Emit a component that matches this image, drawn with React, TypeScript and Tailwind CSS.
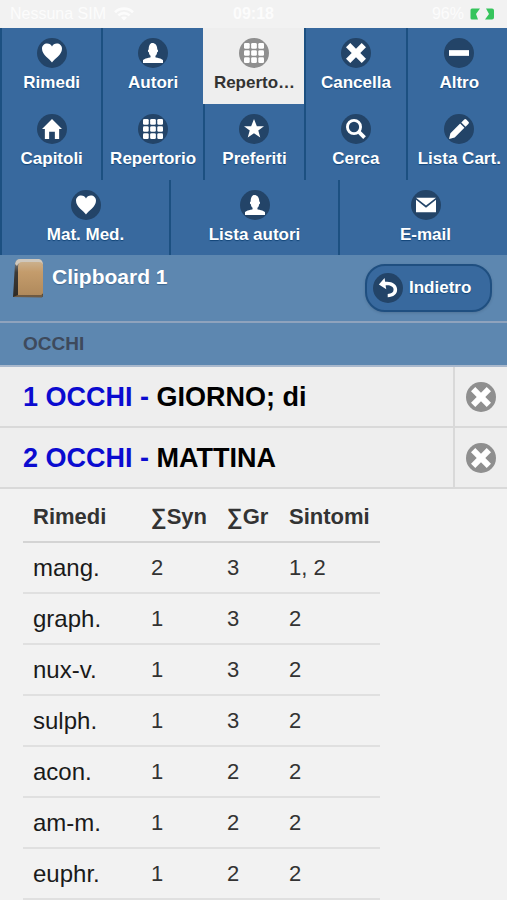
import type { ReactNode } from "react";

type IconName =
  | "heart"
  | "user"
  | "grid"
  | "delete"
  | "minus"
  | "home"
  | "star"
  | "search"
  | "edit"
  | "mail"
  | "back";

const shapes: Record<IconName, ReactNode> = {
  heart: (
    <path d="M7 13.6C5.6 11.4 0 8.2 0 4C0 1.8 1.6.4 3.6.4C5.2.4 6.4 1.3 7 2.4C7.6 1.3 8.8.4 10.4.4C12.4.4 14 1.8 14 4C14 8.2 8.4 11.4 7 13.6Z" />
  ),
  user: (
    <path d="M8.851,10.101c-0.18-0.399-0.2-0.763-0.153-1.104C9.383,8.49,9.738,7.621,9.891,6.465C10.493,6.355,10.5,5.967,10.5,5.5c0-0.437-0.008-0.804-0.502-0.94C9.999,4.539,10,4.521,10,4.5c0-2.103-1-4-2-4C8,0.5,7.5,0,6.5,0C5,0,4,1.877,4,4.5c0,0.021,0.001,0.039,0.002,0.06C3.508,4.696,3.5,5.063,3.5,5.5c0,0.467,0.007,0.855,0.609,0.965C4.262,7.621,4.617,8.49,5.303,8.997c0.047,0.341,0.026,0.704-0.153,1.104C1.503,10.503,0,12,0,12v2h14v-2C14,12,12.497,10.503,8.851,10.101z" />
  ),
  grid: (
    <>
      {[0, 5, 10].map((y) =>
        [0, 5, 10].map((x) => <rect key={`${x}-${y}`} x={x} y={y} width="4" height="4" rx="0.9" />),
      )}
    </>
  ),
  delete: <polygon points="14,3 11,0 7,4 3,0 0,3 4,7 0,11 3,14 7,10 11,14 14,11 10,7" />,
  minus: <rect y="5" width="14" height="4" />,
  home: <polygon points="7,0 0,7 2,7 2,14 5,14 5,9 9,9 9,14 12,14 12,7 14,7" />,
  star: <polygon points="14,5 9,5 7,0 5,5 0,5 4,8 2.625,13 7,10 11.375,13 10,8" />,
  search: (
    <>
      <circle cx="5.6" cy="5.6" r="4.6" fill="none" stroke="currentColor" strokeWidth="2" />
      <path d="M9 9L13 13" stroke="currentColor" strokeWidth="2.6" />
    </>
  ),
  edit: (
    <path d="M1 10L0 14L4 13L10.8 6.2L7.8 3.2ZM8.6 2.4L11.6 5.4L13.5 3.5C14.1 2.9 14.1 2.4 13.6 1.9L12.1.4C11.6-.1 11.1-.1 10.5.5Z" />
  ),
  mail: <path d="M0 3.4V12H14V3.4L7 9ZM14 2H0L7 7.4Z" />,
  back: (
    <path d="M4.6 0L5 2.7C9.8 2.2 13.4 4.4 13.4 8.2C13.4 11.4 10.8 13.2 6.8 13.4V11.2C9.4 10.9 10.9 9.9 10.9 8.2C10.9 6 8.6 4.9 5.3 5.2L5.8 7.8L.6 4.6Z" />
  ),
};

function IconDisc({ name, disc }: { name: IconName; disc: string }) {
  return (
    <span className={`flex size-[30px] shrink-0 items-center justify-center rounded-full text-white ${disc}`}>
      <svg viewBox="0 0 14 14" className="size-5" fill="currentColor" aria-hidden="true">
        {shapes[name]}
      </svg>
    </span>
  );
}

type NavItem = { label: string; icon: IconName; active?: boolean };

const topItems: NavItem[] = [
  { label: "Rimedi", icon: "heart" },
  { label: "Autori", icon: "user" },
  { label: "Reperto…", icon: "grid", active: true },
  { label: "Cancella", icon: "delete" },
  { label: "Altro", icon: "minus" },
  { label: "Capitoli", icon: "home" },
  { label: "Repertorio", icon: "grid" },
  { label: "Preferiti", icon: "star" },
  { label: "Cerca", icon: "search" },
  { label: "Lista Cart.", icon: "edit" },
];

const bottomItems: NavItem[] = [
  { label: "Mat. Med.", icon: "heart" },
  { label: "Lista autori", icon: "user" },
  { label: "E-mail", icon: "mail" },
];

function NavButton({ label, icon, active }: NavItem) {
  const tone = active
    ? "border-[#eeeeee] bg-[#eeeeee] text-[#333333]"
    : "border-[#1c5081] bg-[#38699e] text-white [text-shadow:0_1px_1px_#114477]";
  return (
    <button
      type="button"
      className={`flex min-w-0 flex-col items-center border-l-2 pt-2.5 text-[17px] leading-[30px] font-bold whitespace-nowrap ${tone}`}
    >
      <IconDisc name={icon} disc={active ? "bg-[#8f8f8f]" : "bg-[#234468]"} />
      <span>{label}</span>
    </button>
  );
}

function StatusBar() {
  return (
    <div className="grid h-7 grid-cols-3 items-center bg-[#f2f2f2] px-2.5 text-base text-[#fcfcfc]">
      <div className="flex items-center gap-2 whitespace-nowrap">
        <span>Nessuna SIM</span>
        <svg viewBox="0 0 20 14" className="h-3.5 w-5" fill="none" stroke="currentColor" strokeWidth="2.6" aria-hidden="true">
          <path d="M1 5.2C6 .4 14 .4 19 5.2M4.4 8.4C7.6 5.4 12.4 5.4 15.6 8.4" />
          <path d="M7 10.6C8.8 9.2 11.2 9.2 13 10.6L10 13.6Z" fill="currentColor" stroke="none" />
        </svg>
      </div>
      <span className="text-center font-bold">09:18</span>
      <div className="flex items-center justify-end gap-1.5 pr-0.5">
        <span>96%</span>
        <svg viewBox="0 0 25 12" className="h-3 w-[25px]" aria-hidden="true">
          <path d="M2 .5H10L6 6L8 11.5H2Q.5 11.5 .5 10V2Q.5.5 2 .5ZM16 .5H22Q24 .5 24 2.5V9.5Q24 11.5 22 11.5H15L19 6Z" fill="#36c45c" />
        </svg>
      </div>
    </div>
  );
}

function Book() {
  return (
    <svg viewBox="0 0 32 40" className="h-10 w-8 shrink-0" aria-hidden="true">
      <defs>
        <linearGradient id="cover" x1="0" y1="0" x2="0" y2="1">
          <stop offset="0" stopColor="#cbb08c" />
          <stop offset="0.3" stopColor="#c49c6c" />
          <stop offset="1" stopColor="#b08a5c" />
        </linearGradient>
        <linearGradient id="spine" x1="0" y1="0" x2="0" y2="1">
          <stop offset="0" stopColor="#8d9296" />
          <stop offset="0.35" stopColor="#3d3a36" />
          <stop offset="1" stopColor="#2e2a25" />
        </linearGradient>
      </defs>
      <path d="M1 38L3 5Q4 0 8 0H27Q31 1 31 6V37Q31 38 29 38Z" fill="url(#spine)" />
      <path d="M3 5Q4 0 8 0H27Q31 1 31 6L28 4H9Q6 4 5 7Z" fill="#cfc8bd" />
      <path d="M6 8Q6 3 10 3H27Q31 3 31 7V34Q31 36 29 36H6Z" fill="url(#cover)" />
      <path d="M1 38L6 36H31L30 38.5Z" fill="#6e5a42" />
    </svg>
  );
}

const symptoms = [
  { id: 1, chapter: "OCCHI", text: "GIORNO; di" },
  { id: 2, chapter: "OCCHI", text: "MATTINA" },
];

const remedies = [
  ["mang.", "2", "3", "1, 2"],
  ["graph.", "1", "3", "2"],
  ["nux-v.", "1", "3", "2"],
  ["sulph.", "1", "3", "2"],
  ["acon.", "1", "2", "2"],
  ["am-m.", "1", "2", "2"],
  ["euphr.", "1", "2", "2"],
];

export default function App() {
  return (
    <div className="min-h-screen bg-[#f2f2f2] font-['Liberation_Sans',Arial,sans-serif] text-[#333333]">
      <StatusBar />

      <nav className="bg-[#38699e]">
        <div className="grid auto-rows-[76px] grid-cols-5 [&>*:nth-child(5n)]:pl-1">
          {topItems.map((item, i) => (
            <NavButton key={i} {...item} />
          ))}
        </div>
        <div className="grid auto-rows-[75px] grid-cols-3 [&>*:nth-child(3n)]:pl-1">
          {bottomItems.map((item) => (
            <NavButton key={item.label} {...item} />
          ))}
        </div>
      </nav>

      <header className="flex h-[66px] items-center bg-[#5d87b0] pr-[15px] pl-3">
        <div className="flex flex-1 gap-2 self-start pt-1">
          <Book />
          <h1 className="pt-1 text-[21px] leading-7 font-bold text-white [text-shadow:0_1px_1px_#3e6790]">
            Clipboard 1
          </h1>
        </div>
        <button
          type="button"
          className="flex h-12 w-[127px] items-center gap-1.5 rounded-[20px] border-2 border-[#1f4f80] bg-[#38699e] pl-1.5 text-[17px] font-bold text-white shadow-[0_1px_3px_rgba(0,0,0,0.15)] [text-shadow:0_1px_1px_#114477]"
        >
          <IconDisc name="back" disc="bg-[#234468]" />
          Indietro
        </button>
      </header>

      <main>
        <h2 className="flex h-[46px] items-center border-y-2 border-t-[#8fa3bd] border-b-[#a9b8cc] bg-[#5d87b0] px-[23px] text-[19px] font-bold text-[#3e4a5c]">
          OCCHI
        </h2>
        <ul>
          {symptoms.map((s) => (
            <li key={s.id} className="flex h-[61px] border-b-2 border-[#d9d9d9] bg-[#eeeeee]">
              <a href={`#sintomo-${s.id}`} className="flex flex-1 items-center px-[23px] pt-0.5 text-[27px] font-bold text-black">
                <span className="whitespace-pre text-[#0b0bd0]">{`${s.id} ${s.chapter} - `}</span>
                {s.text}
              </a>
              <button
                type="button"
                aria-label={`Elimina ${s.text}`}
                className="flex w-[54px] items-center justify-center border-l-2 border-[#d9d9d9]"
              >
                <IconDisc name="delete" disc="bg-[#8f8f8f]" />
              </button>
            </li>
          ))}
        </ul>

        <table className="ml-[23px] w-[357px] table-fixed border-collapse text-left text-[22px] leading-7">
          <thead>
            <tr className="h-[53px] border-b-2 border-[#d4d4d4]">
              <th className="w-[118px] pt-1 pl-2.5">Rimedi</th>
              <th className="w-[76px] pt-1 pl-2.5">∑Syn</th>
              <th className="w-[62px] pt-1 pl-2.5">∑Gr</th>
              <th className="pt-1 pl-2.5">Sintomi</th>
            </tr>
          </thead>
          <tbody>
            {remedies.map(([name, syn, gr, refs]) => (
              <tr key={name} className="h-[51px] border-b-2 border-[#e0e0e0]">
                <td className="pl-2.5 text-[24px] text-[#1a1a1a]">{name}</td>
                <td className="pl-2.5">{syn}</td>
                <td className="pl-2.5">{gr}</td>
                <td className="pl-2.5">{refs}</td>
              </tr>
            ))}
          </tbody>
        </table>
      </main>
    </div>
  );
}
